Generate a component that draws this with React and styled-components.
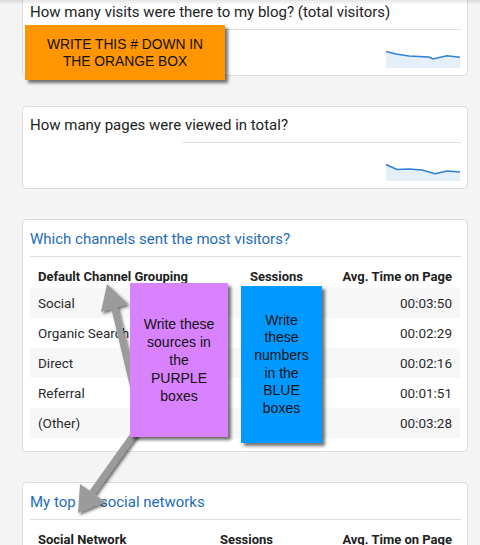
import React from "react";
import styled, { createGlobalStyle } from "styled-components";

const GlobalStyle = createGlobalStyle`
  html, body {
    margin: 0;
    padding: 0;
    background: #f4f4f4;
    font-family: Roboto, "Liberation Sans", Arial, sans-serif;
    overflow: hidden;
  }
`;

const Page = styled.div`
  position: relative;
  width: 480px;
  height: 545px;
  overflow: hidden;
`;

const Column = styled.div`
  display: flex;
  flex-direction: column;
  gap: 30px;
  margin-top: -7px;
  padding-left: 22px;
`;

const Card = styled.div`
  width: 446px;
  box-sizing: border-box;
  background: #fff;
  border: 1px solid #dcdcdc;
  border-radius: 4px;
  padding: 0 7px ${(p) => p.$bottom || 7}px;
`;

const Title = styled.div`
  font-size: 15px;
  line-height: 20px;
  padding: ${(p) => (p.$blue ? "9px" : "8px")} 0 7px;
  color: ${(p) => (p.$blue ? "#1e6cb8" : "#222")};
  white-space: nowrap;
`;

const Divider = styled.div`
  height: 1px;
  background: #dedede;
  margin-left: ${(p) => p.$inset || 0}px;
  margin-right: -1px;
`;

const SparkWrap = styled.div`
  display: flex;
  justify-content: flex-end;
  margin-top: 21px;
  height: 17px;
`;

const Table = styled.div`
  display: grid;
  grid-template-columns: 1fr 80px ${(p) => p.$last}px;
`;

const HeadCell = styled.div`
  font-size: 13px;
  font-weight: 700;
  line-height: 16px;
  color: #212121;
  padding: 12px 8px 3px;
  text-align: ${(p) => (p.$right ? "right" : "left")};
  white-space: nowrap;
`;

const Cell = styled.div`
  font-size: 13.5px;
  height: 30px;
  line-height: 30px;
  color: #2a2a2a;
  padding: 0 8px;
  background: ${(p) => (p.$shade ? "#f7f7f7" : "#fff")};
  text-align: ${(p) => (p.$right ? "right" : "left")};
  white-space: nowrap;
  overflow: hidden;
`;

const Note = styled.div`
  position: absolute;
  left: ${(p) => p.$x}px;
  top: ${(p) => p.$y}px;
  width: ${(p) => p.$w}px;
  height: ${(p) => p.$h}px;
  background: ${(p) => p.$bg};
  box-shadow: 3px 3px 3px rgba(0, 0, 0, 0.55);
  display: flex;
  align-items: center;
  justify-content: center;
  text-align: center;
  font-family: "Liberation Sans", Arial, sans-serif;
  font-size: ${(p) => p.$size || 14}px;
  line-height: ${(p) => p.$lh || 18}px;
  color: #111;
`;

const ArrowLayer = styled.svg`
  position: absolute;
  left: 0;
  top: 0;
  pointer-events: none;
`;

const TopShade = styled.div`
  position: absolute;
  left: 0;
  top: 0;
  width: 100%;
  height: 5px;
  background: linear-gradient(rgba(0, 0, 0, 0.1), rgba(0, 0, 0, 0));
`;

const Spark = ({ points }) => {
  const line = points.map(([x, y]) => `${x},${y}`).join(" ");
  const area = `0,17 ${line} 74,17`;
  return (
    <svg width="74" height="17" viewBox="0 0 74 17">
      <polygon points={area} fill="#e5effa" />
      <polyline points={line} fill="none" stroke="#2f80d8" strokeWidth="1.6" />
    </svg>
  );
};

const DataTable = ({ head, rows, last }) => (
  <Table $last={last}>
    <HeadCell>{head}</HeadCell>
    <HeadCell $right>Sessions</HeadCell>
    <HeadCell $right>Avg. Time on Page</HeadCell>
    {rows.map(([name, time], i) => (
      <React.Fragment key={name}>
        <Cell $shade={i % 2 === 0}>{name}</Cell>
        <Cell $shade={i % 2 === 0} $right></Cell>
        <Cell $shade={i % 2 === 0} $right>{time}</Cell>
      </React.Fragment>
    ))}
  </Table>
);

const channels = [
  ["Social", "00:03:50"],
  ["Organic Search", "00:02:29"],
  ["Direct", "00:02:16"],
  ["Referral", "00:01:51"],
  ["(Other)", "00:03:28"],
];

const App = () => {
  return (
    <Page>
      <GlobalStyle />
      <Column>
        <Card>
          <Title>How many visits were there to my blog? (total visitors)</Title>
          <Divider $inset={153} />
          <SparkWrap>
            <Spark points={[[0, 0.5], [10, 3], [23, 5], [43, 6], [47, 8], [61, 4.7], [74, 6.3]]} />
          </SparkWrap>
        </Card>
        <Card>
          <Title>How many pages were viewed in total?</Title>
          <Divider $inset={153} />
          <SparkWrap>
            <Spark points={[[0, 0.5], [11, 5.5], [23, 5], [36, 6], [49, 9.7], [61, 7], [74, 8]]} />
          </SparkWrap>
        </Card>
        <Card $bottom={13}>
          <Title $blue>Which channels sent the most visitors?</Title>
          <Divider />
          <DataTable head="Default Channel Grouping" rows={channels} last={149} />
        </Card>
        <Card $bottom={13}>
          <Title $blue>My top 10 social networks</Title>
          <Divider />
          <DataTable head="Social Network" rows={[]} last={179} />
        </Card>
      </Column>

      <TopShade />

      <Note $x={25} $y={25} $w={200} $h={55} $bg="#ff9500" $size={13.8} $lh={17}>
        WRITE THIS # DOWN IN
        <br />
        THE ORANGE BOX
      </Note>

      <ArrowLayer width="480" height="545">
        <defs>
          <filter id="shadow" x="-20%" y="-20%" width="140%" height="140%">
            <feDropShadow dx="2" dy="2" stdDeviation="1.5" floodColor="#000" floodOpacity="0.55" />
          </filter>
        </defs>
        <g filter="url(#shadow)" fill="#9b9b9b">
          <polyline points="114,306 142,423 92,493" fill="none" stroke="#9b9b9b" strokeWidth="6.5" strokeLinejoin="round" />
          <circle cx="142" cy="423" r="6.5" />
          <polygon points="107,284 128,304 101,312" />
          <polygon points="78,513 80,484 105,502" />
        </g>
      </ArrowLayer>

      <Note $x={130} $y={283} $w={98} $h={154} $bg="#d982ff">
        Write these
        <br />
        sources in
        <br />
        the
        <br />
        PURPLE
        <br />
        boxes
      </Note>

      <Note $x={241} $y={286} $w={81} $h={157} $bg="#0099ff" $lh={17.6}>
        Write
        <br />
        these
        <br />
        numbers
        <br />
        in the
        <br />
        BLUE
        <br />
        boxes
      </Note>
    </Page>
  );
};

export default App;
